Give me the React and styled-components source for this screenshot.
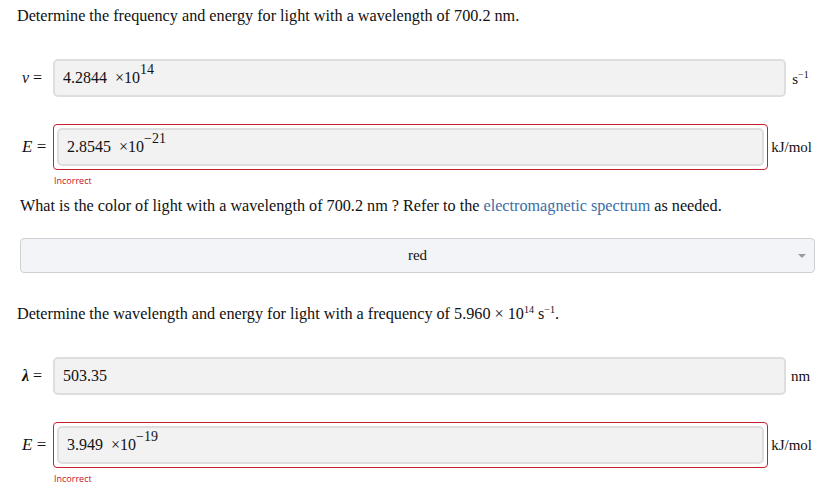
import React from "react";
import styled, { createGlobalStyle } from "styled-components";

const Global = createGlobalStyle`
  html, body {
    margin: 0;
    padding: 0;
    background: #fff;
  }
  body {
    font-family: "Liberation Serif", "Times New Roman", serif;
    font-size: 16px;
    color: #111;
  }
`;

const Page = styled.div`
  width: 840px;
  padding: 6px 25px 0 17px;
  box-sizing: border-box;
`;

const Prompt = styled.p`
  margin: ${(p) => p.$margin || "0"};
  padding-left: ${(p) => p.$indent || 0}px;
  font-size: 16.2px;
  line-height: 20px;
`;

const Link = styled.a`
  color: #3a6ea8;
  text-decoration: none;
`;

const Row = styled.div`
  display: flex;
  align-items: center;
  padding-left: 5px;
  margin-top: ${(p) => p.$top}px;
`;

const Label = styled.div`
  flex: 0 0 31px;
  font-size: ${(p) => p.$size || 16}px;
  white-space: nowrap;
`;

const Var = styled.span`
  font-style: italic;
  font-weight: ${(p) => (p.$bold ? 700 : 400)};
`;

const Wrong = styled.div`
  flex: 1;
  border: 1px solid #c3222e;
  border-radius: 4px;
  padding: 3px;
`;

const Field = styled.div`
  flex: 1;
  height: 38px;
  box-sizing: border-box;
  background: #f2f2f2;
  border: 2px solid #dedede;
  border-radius: 5px;
  padding: 0 8px;
  display: flex;
  align-items: center;
  font-size: 16px;
`;

const Value = styled.span`
  white-space: pre;
  line-height: 20px;
`;

const Sup = styled.sup`
  font-size: 14px;
  position: relative;
  top: -3px;
  line-height: 0;
`;

const Unit = styled.div`
  flex: 0 0 auto;
  min-width: 29px;
  padding: 0 3px;
  box-sizing: border-box;
  text-align: center;
  font-size: 15px;
  align-self: ${(p) => (p.$up ? "flex-start" : "center")};
  padding-top: ${(p) => (p.$up ? 10 : 0)}px;
`;

const SmallSup = styled.sup`
  font-size: 10px;
`;

const Error = styled.div`
  margin: 5px 0 0 37px;
  font-family: "Open Sans", "Liberation Sans", sans-serif;
  font-size: 9px;
  color: #c8102e;
  line-height: 12px;
`;

const Select = styled.div`
  margin: 22px 0 0 3px;
  height: 35px;
  box-sizing: border-box;
  background: #f3f4f7;
  border: 1px solid #cfd0d3;
  border-radius: 4px;
  position: relative;
  display: flex;
  align-items: center;
  justify-content: center;
  font-size: 15px;
`;

const Caret = styled.span`
  position: absolute;
  right: 8px;
  top: 15px;
  width: 0;
  height: 0;
  border-left: 4px solid transparent;
  border-right: 4px solid transparent;
  border-top: 4px solid #999;
`;

const Times = () => <span>&nbsp;×10</span>;

export default function App() {
  return (
    <Page>
      <Global />
      <Prompt>
        Determine the frequency and energy for light with a wavelength of 700.2 nm.
      </Prompt>

      <Row $top={33}>
        <Label>
          <Var>ν</Var> =
        </Label>
        <Field>
          <Value>
            4.2844 <Times />
            <Sup>14</Sup>
          </Value>
        </Field>
        <Unit $up>
          s<SmallSup>−1</SmallSup>
        </Unit>
      </Row>

      <Row $top={27}>
        <Label $size={17}>
          <Var>E</Var> =
        </Label>
        <Wrong>
          <Field>
            <Value>
              2.8545 <Times />
              <Sup>−21</Sup>
            </Value>
          </Field>
        </Wrong>
        <Unit>kJ/mol</Unit>
      </Row>
      <Error>Incorrect</Error>

      <Prompt $margin="9px 0 0" $indent={3}>
        What is the color of light with a wavelength of 700.2 nm ? Refer to the{" "}
        <Link href="#">electromagnetic spectrum</Link> as needed.
      </Prompt>

      <Select>
        red
        <Caret />
      </Select>

      <Prompt $margin="27px 0 0">
        Determine the wavelength and energy for light with a frequency of 5.960 × 10
        <SmallSup>14</SmallSup> s<SmallSup>−1</SmallSup>.
      </Prompt>

      <Row $top={33}>
        <Label>
          <Var $bold>λ</Var> =
        </Label>
        <Field>
          <Value>503.35</Value>
        </Field>
        <Unit>nm</Unit>
      </Row>

      <Row $top={27}>
        <Label $size={17}>
          <Var>E</Var> =
        </Label>
        <Wrong>
          <Field>
            <Value>
              3.949 <Times />
              <Sup>−19</Sup>
            </Value>
          </Field>
        </Wrong>
        <Unit>kJ/mol</Unit>
      </Row>
      <Error>Incorrect</Error>
    </Page>
  );
}
